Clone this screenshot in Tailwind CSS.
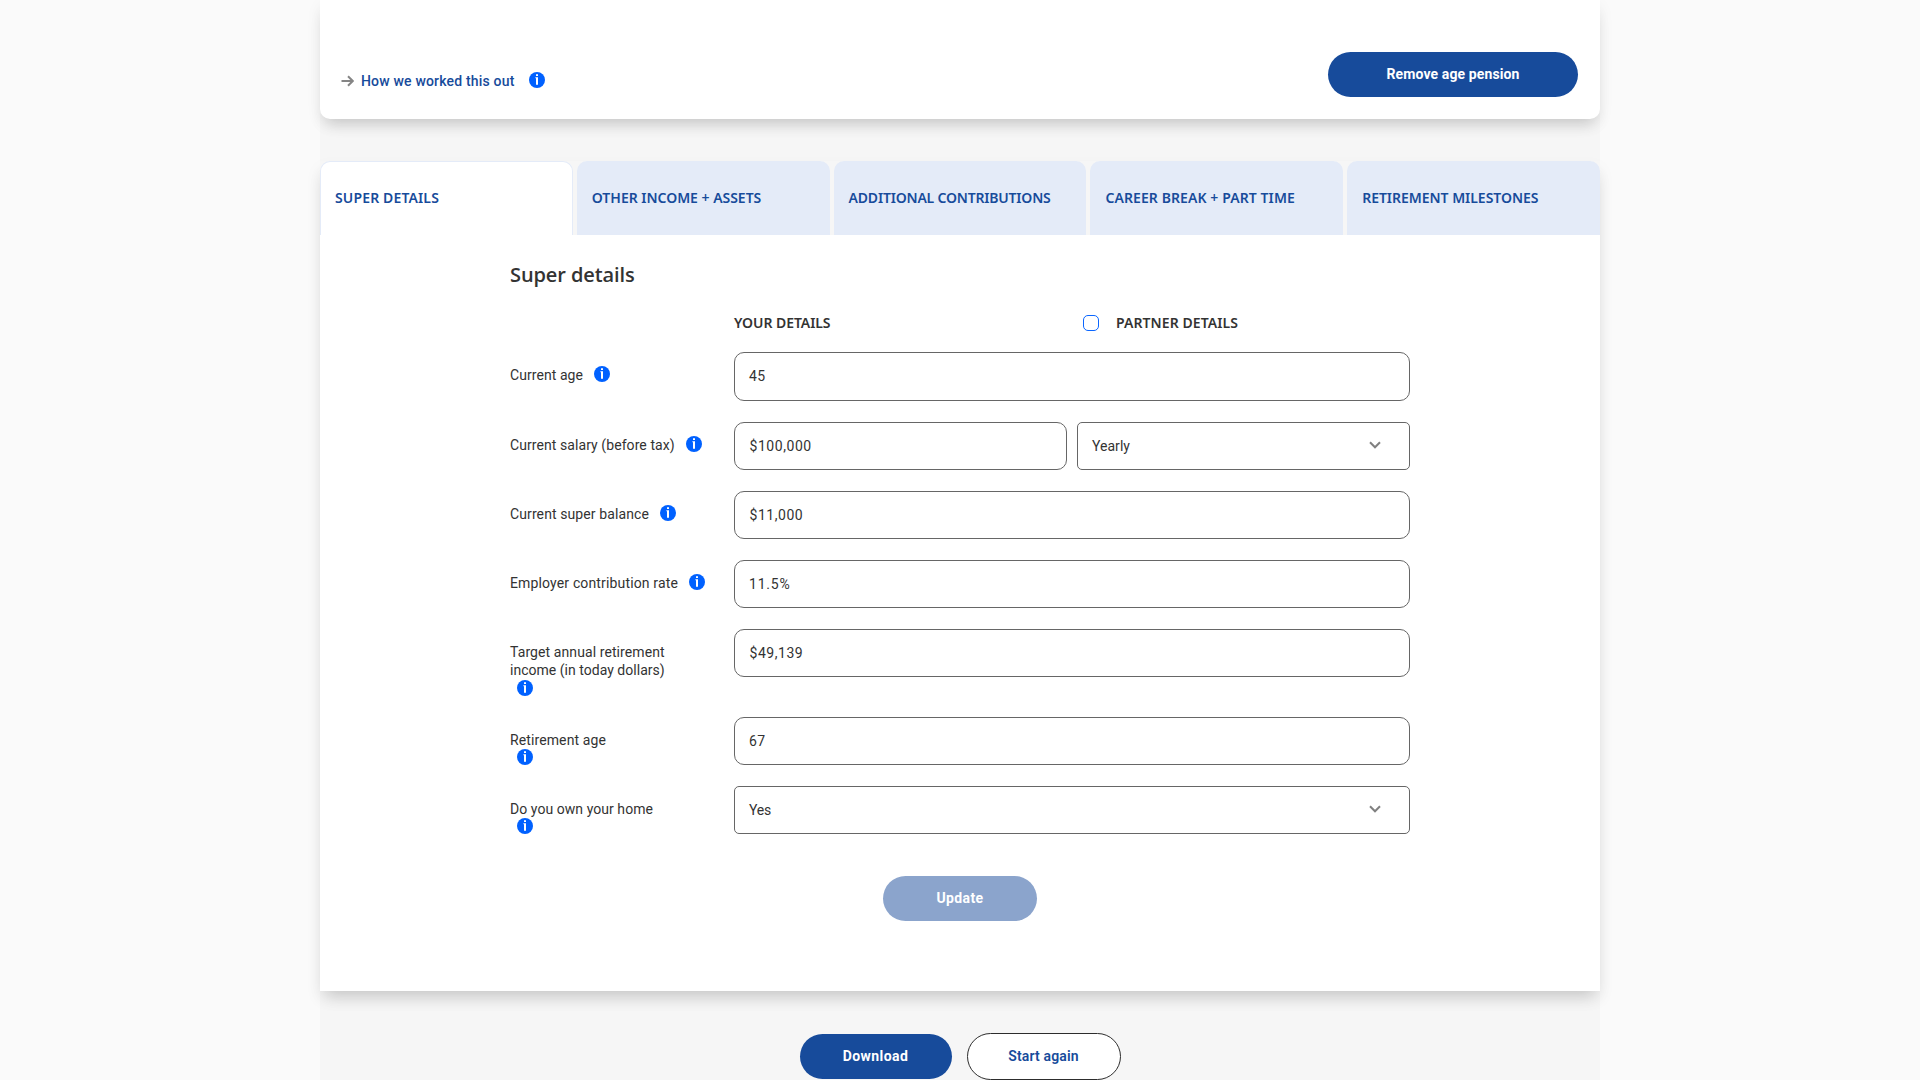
<!DOCTYPE html>
<html lang="en">
<head>
<meta charset="utf-8">
<title>Retirement calculator</title>
<script src="https://cdn.jsdelivr.net/npm/@tailwindcss/browser@4"></script>
</head>
<body class="h-screen overflow-hidden bg-[#fafafa] font-['Roboto',sans-serif] text-sm text-[#333]">
<svg class="hidden">
  <symbol id="info" viewBox="0 0 16 16"><circle cx="8" cy="8" r="8" fill="#0061ff"/><path d="M7 2.2h2v1.8H7zM6.4 5.2H9v7.6H7V6.3h-.6z" fill="#fff"/></symbol>
  <symbol id="chevron" viewBox="0 0 12 8"><path d="M1 1.3l5 5 5-5" fill="none" stroke="#808080" stroke-width="2"/></symbol>
</svg>
<main class="mx-auto flex h-full w-[1280px] flex-col bg-[#f6f6f6]">

  <section class="flex h-[119px] shrink-0 items-start justify-between rounded-b-[10px] bg-white pl-[21px] pr-[22px] pt-[52px] shadow-[0_10px_16px_-6px_rgba(0,0,0,0.16),0_6px_16px_rgba(0,0,0,0.06)]">
    <div class="flex pt-5">
      <svg class="mt-[3px] h-3 w-[13px]" viewBox="0 0 13 12" fill="none" stroke="#858585" stroke-width="2"><path d="M.5 6h11M7 1.2L11.8 6 7 10.8"/></svg>
      <a class="ml-[7px] w-[154px] whitespace-nowrap font-medium leading-[18px] tracking-[0.181px] text-[#174b9b]">How we worked this out</a>
      <svg class="ml-[14px] size-4"><use href="#info"/></svg>
    </div>
    <button class="h-[45px] w-[250px] rounded-full bg-[#174b9b] pb-0.5 font-bold tracking-[0.113px] text-white">Remove age pension</button>
  </section>

  <section class="mt-[42px] h-[830px] shrink-0 shadow-[0_10px_16px_-6px_rgba(0,0,0,0.16),0_8px_16px_rgba(0,0,0,0.06)]">
    <nav class="grid h-[74px] grid-cols-5 gap-1 font-['Noto_Sans',sans-serif] font-semibold text-[#174b9b] *:flex *:items-center *:whitespace-nowrap *:rounded-t-[10px]">
      <a class="border border-b-0 border-[#e4ebf8] bg-white pb-px pl-[14px] tracking-[0.138px]">SUPER DETAILS</a>
      <a class="bg-[#e4ebf8] pl-[15px] tracking-[-0.022px]">OTHER INCOME + ASSETS</a>
      <a class="bg-[#e4ebf8] pl-[15px] tracking-[-0.193px]">ADDITIONAL CONTRIBUTIONS</a>
      <a class="bg-[#e4ebf8] pl-[15px] tracking-[0.092px]">CAREER BREAK + PART TIME</a>
      <a class="bg-[#e4ebf8] pl-[15px] tracking-[-0.032px]">RETIREMENT MILESTONES</a>
    </nav>

    <div class="h-[756px] bg-white pl-[190px] pr-[190px] pt-[26px]">
      <h2 class="h-[28px] font-['Open_Sans',sans-serif] text-xl font-semibold leading-[28px] tracking-[-0.1px]">Super details</h2>

      <div class="mt-[24px] flex h-[20px] items-center pl-[224px] font-['Noto_Sans',sans-serif] font-semibold">
        <span class="w-[349px] tracking-[-0.064px]">YOUR DETAILS</span>
        <span class="size-4 rounded-[5px] border border-[#0a66ff]"></span>
        <span class="ml-[17px] tracking-[0.08px]">PARTNER DETAILS</span>
      </div>

      <form class="mt-[19px] grid grid-cols-[224px_676px] leading-[18px]">
        <div class="flex h-[70px] gap-[11px] whitespace-nowrap"><label class="pt-[14px] tracking-[0.06px]">Current age</label><svg class="mt-[14px] size-4"><use href="#info"/></svg></div>
        <div class="flex h-[49px] items-center rounded-[10px] border border-[#666] pb-px pl-[14px] tracking-[0.275px]">45</div>

        <div class="flex h-[69px] gap-[11px] whitespace-nowrap"><label class="pt-[14px] tracking-[0.075px]">Current salary (before tax)</label><svg class="mt-[14px] size-4"><use href="#info"/></svg></div>
        <div class="grid h-12 grid-cols-[333px_333px] gap-[10px]">
          <div class="flex items-center rounded-[10px] border border-[#666] pl-[14.5px] tracking-[0.55px]">$100,000</div>
          <div class="flex items-center justify-between rounded-[5px] border border-[#666] pl-[14px] pr-[28px] tracking-[0.036px]">Yearly<svg class="-mt-0.5 h-2 w-3"><use href="#chevron"/></svg></div>
        </div>

        <div class="flex h-[69px] gap-[11px] whitespace-nowrap"><label class="pt-[14px] tracking-[0.103px]">Current super balance</label><svg class="mt-[14px] size-4"><use href="#info"/></svg></div>
        <div class="flex h-12 items-center rounded-[10px] border border-[#666] pl-[14.5px] tracking-[0.54px]">$11,000</div>

        <div class="flex h-[69px] gap-[11px] whitespace-nowrap"><label class="pt-[14px] tracking-[0.147px]">Employer contribution rate</label><svg class="mt-[14px] size-4"><use href="#info"/></svg></div>
        <div class="flex h-12 items-center rounded-[10px] border border-[#666] pl-[14px] tracking-[0.787px]">11.5%</div>

        <div class="h-[88px] whitespace-nowrap pt-[14px]"><label class="block"><span class="block tracking-[0.091px]">Target annual retirement</span><span class="block tracking-[0.024px]">income (in today dollars)</span></label><svg class="ml-[7px] mt-px size-4"><use href="#info"/></svg></div>
        <div class="flex h-12 items-center rounded-[10px] border border-[#666] pl-[14.5px] tracking-[0.54px]">$49,139</div>

        <div class="h-[69px] whitespace-nowrap pt-[14px]"><label class="block tracking-[0.109px]">Retirement age</label><svg class="ml-[7px] size-4"><use href="#info"/></svg></div>
        <div class="flex h-12 items-center rounded-[10px] border border-[#666] pl-[14px] tracking-[0.275px]">67</div>

        <div class="h-[69px] whitespace-nowrap pt-[14px]"><label class="block tracking-[0.055px]">Do you own your home</label><svg class="ml-[7px] size-4"><use href="#info"/></svg></div>
        <div class="flex h-12 items-center justify-between rounded-[5px] border border-[#666] pl-[14px] pr-[28px] tracking-[-0.2px]">Yes<svg class="-mt-0.5 h-2 w-3"><use href="#chevron"/></svg></div>
      </form>

      <button class="ml-[373px] mt-[21px] block h-[45px] w-[154px] rounded-full bg-[#8ba4cc] pb-0.5 font-bold tracking-[0.37px] text-white">Update</button>
    </div>
  </section>

  <div class="mt-[42px] flex h-[47px] shrink-0 items-center justify-center gap-[15px]">
    <button class="h-[45px] w-[152px] rounded-full bg-[#174b9b] pb-0.5 font-bold tracking-[0.422px] text-white">Download</button>
    <button class="h-[47px] w-[154px] rounded-full border border-[#2d2d2d] bg-white pb-0.5 font-semibold tracking-[0.155px] text-[#174b9b]">Start again</button>
  </div>
</main>
</body>
</html>
